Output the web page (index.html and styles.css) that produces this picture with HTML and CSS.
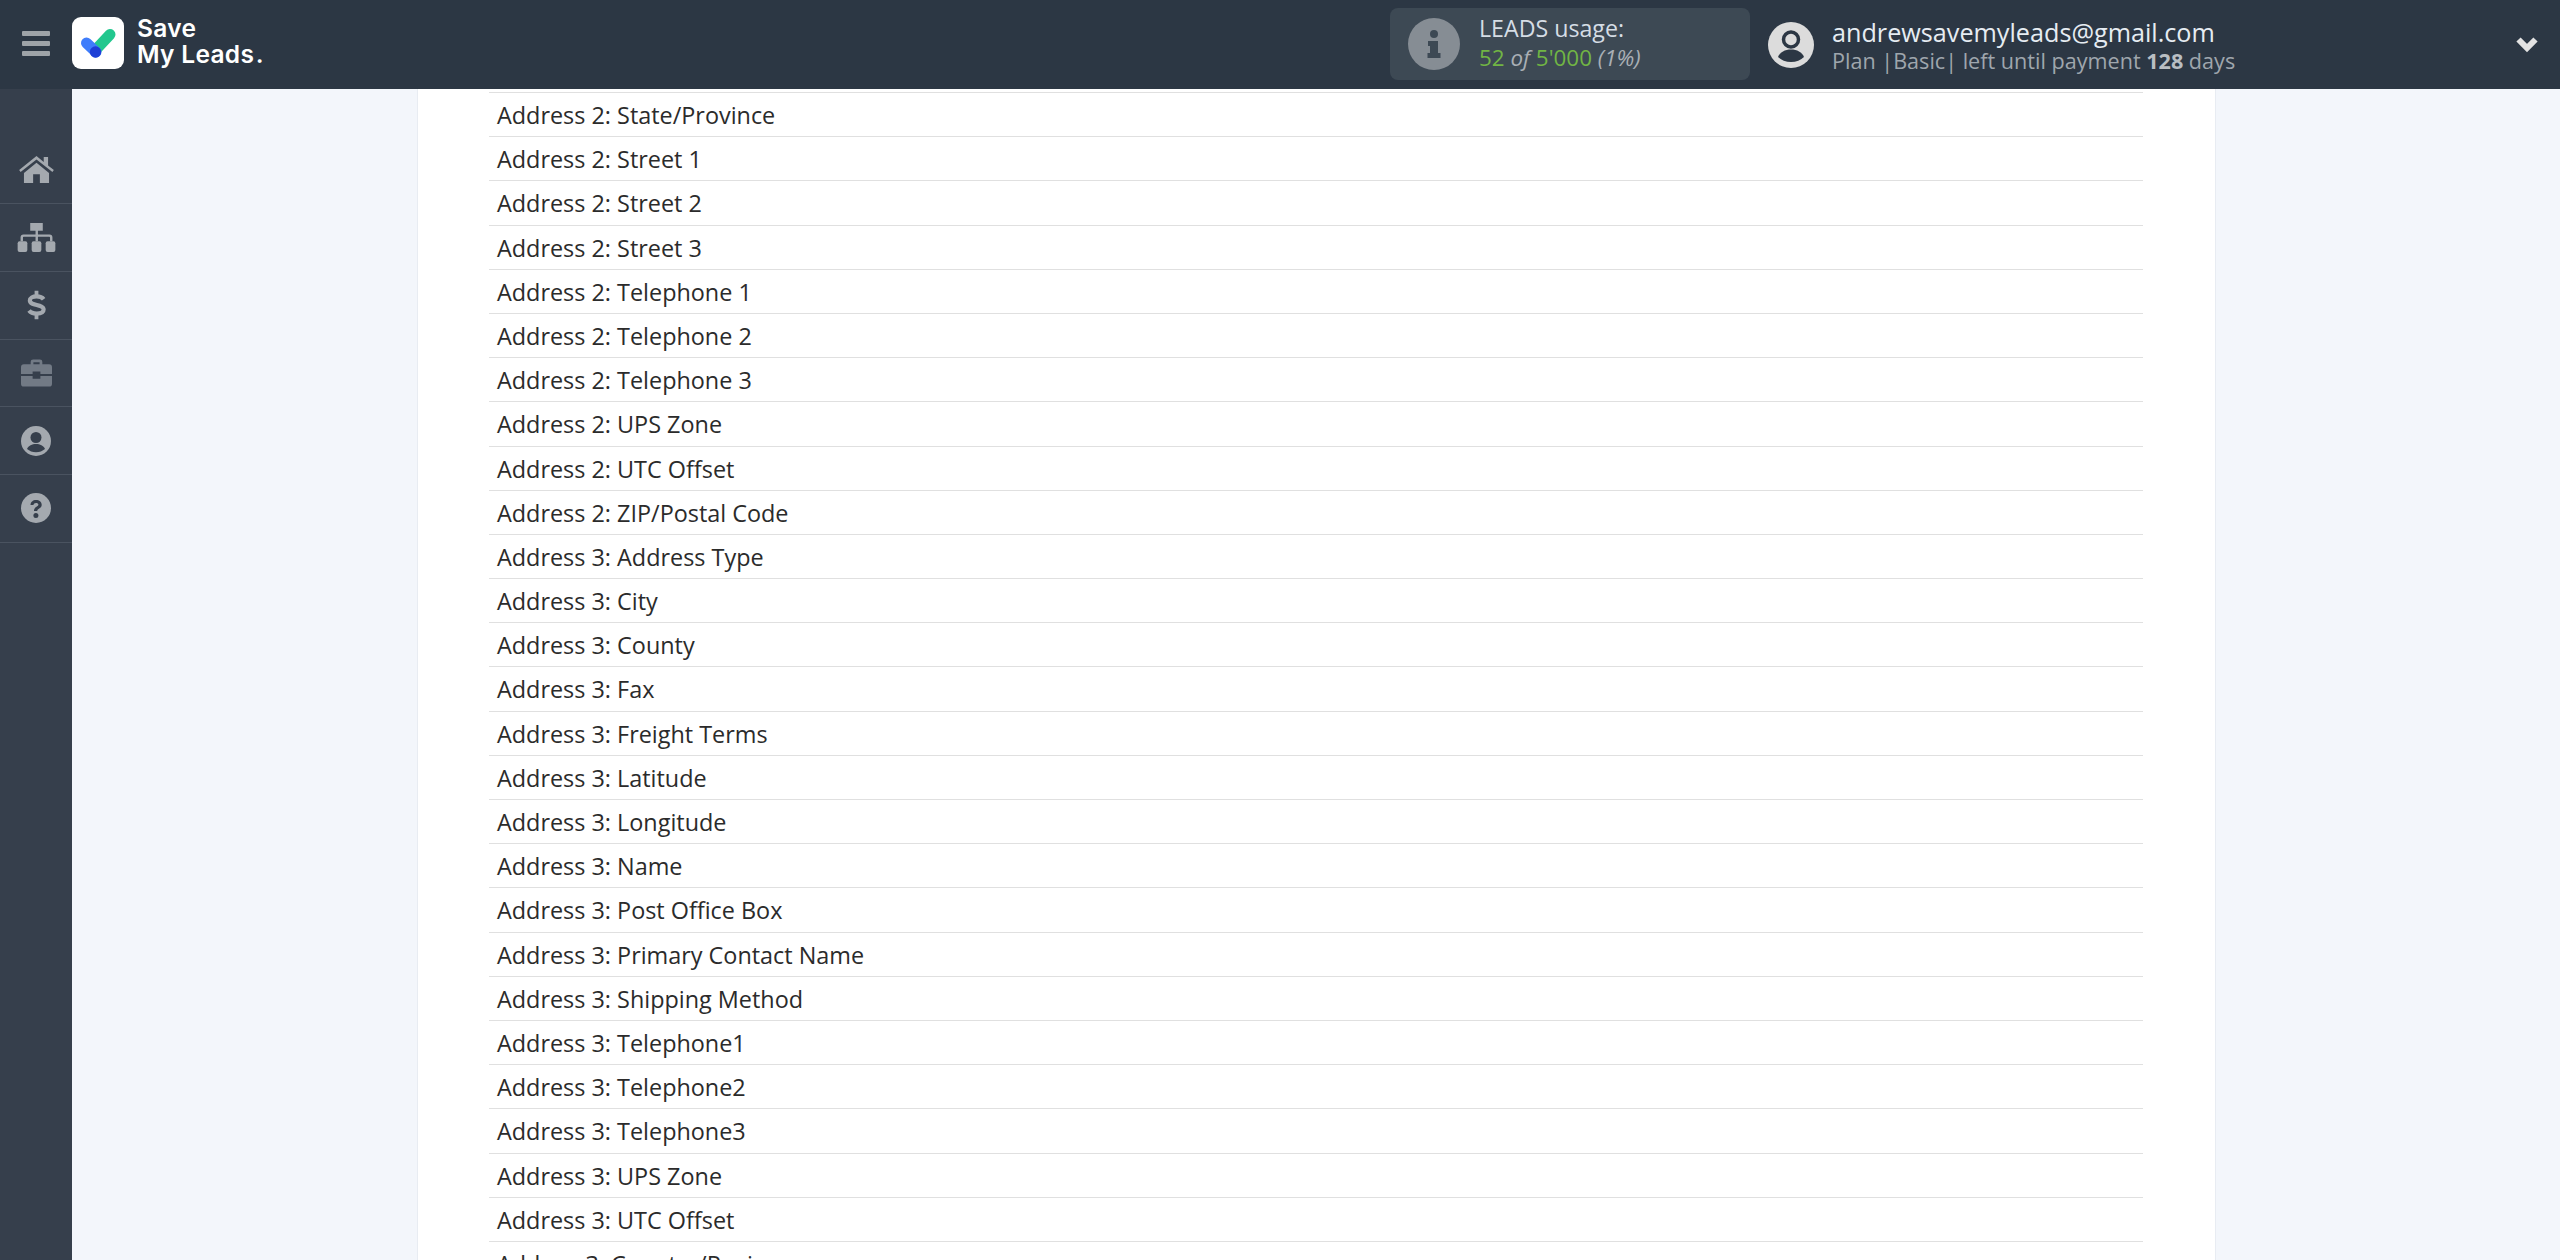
FILE: index.html
```html
<!DOCTYPE html>
<html lang="en">
<head>
<meta charset="utf-8">
<title>Save My Leads</title>
<link rel="stylesheet" href="styles.css">
</head>
<body>
<div class="app">
  <header class="topbar">
    <div class="burger"><span></span><span></span><span></span></div>
    <div class="logo">
      <svg class="logo-mark" viewBox="0 0 52 52">
        <rect width="52" height="52" rx="9" fill="#fff"/>
        <path d="M38 17.500 23.500 33" stroke="#22c78e" stroke-width="11" stroke-linecap="round" fill="none"/>
        <path d="M14.500 26 24 35" stroke="#3f7dfb" stroke-width="11" stroke-linecap="round" fill="none"/>
        <circle cx="23.500" cy="35" r="5.700" fill="#1d3fd6"/>
      </svg>
      <div class="logo-text"><span>Save</span><span>My Leads<i class="logo-dot">.</i></span></div>
    </div>
    <div class="usage">
      <svg class="usage-icon" viewBox="0 0 52 52">
        <circle cx="26" cy="26" r="26" fill="#868d94"/>
        <circle cx="26" cy="16" r="4" fill="#3d4954"/>
        <path d="M20 23h10v12h2.500v5h-13v-5H22v-7h-2z" fill="#3d4954"/>
      </svg>
      <div class="usage-text">
        <div class="usage-title">LEADS usage:</div>
        <div class="usage-count"><b>52</b> <em>of</em> <b>5'000</b> <em>(1%)</em></div>
      </div>
    </div>
    <div class="account">
      <svg class="avatar" viewBox="0 0 46 46">
        <circle cx="23" cy="23" r="23" fill="#dcdcdc"/>
        <circle cx="23" cy="17.500" r="7.500" fill="none" stroke="#2c3744" stroke-width="3.500"/>
        <path d="M10 35c2-5 7-7.500 13-7.500S34 30 36 35c-3 3-8 5-13 5s-10-2-13-5z" fill="#2c3744"/>
      </svg>
      <div class="account-text">
        <div class="account-mail">andrewsavemyleads@gmail.com</div>
        <div class="account-plan">Plan |Basic| left until payment <b>128</b> days</div>
      </div>
    </div>
    <svg class="chevron" viewBox="0 0 24 18"><path d="M3.500 3.500 12 12l8.500-8.500" fill="none" stroke="#e3e3e3" stroke-width="6"/></svg>
  </header>
  <div class="body-row">
    <nav class="sidebar">
      <a class="nav-item"><svg width="35" height="27" viewBox="0 0 36 28"><path fill="#a4a9af" d="M18 0 0 14.500l1.500 2L18 3.500l16.500 13 1.500-2L30 9.800V1h-4.500v5.200zM5 17.500V28h9.500v-9h7v9H31V17.500L18 7z"/></svg></a>
      <a class="nav-item"><svg width="39" height="29" viewBox="0 0 39 30"><path fill="#a4a9af" d="M13 0h13v8h-5v4h12a3 3 0 0 1 3 3v4h-2.500v-4a.8.800 0 0 0-.8-.8H21V19h-2.500v-4.800H6.300a.8.800 0 0 0-.8.800v4H3v-4a3 3 0 0 1 3-3h12.500V8H13z"/><rect y="19" width="10" height="11" rx="2" fill="#a4a9af"/><rect x="14.500" y="19" width="10" height="11" rx="2" fill="#a4a9af"/><rect x="29" y="19" width="10" height="11" rx="2" fill="#a4a9af"/></svg></a>
      <a class="nav-item"><svg width="19" height="30" viewBox="0 0 20 30"><path fill="none" stroke="#a4a9af" stroke-width="4.400" d="M17.500 9C16 6.800 13 6 10 6c-4 0-7 1.600-7 4.300 0 6 14.500 3.400 14.500 9.500 0 2.800-3.200 4.200-7.300 4.200-3.200 0-6.500-1-8-3.200"/><path fill="#a4a9af" d="M8 0h4v6H8zM8 24h4v6H8z"/></svg></a>
      <a class="nav-item"><svg width="31" height="28" viewBox="0 0 32 28"><path fill="#727a85" d="M10 5V2.500A2.500 2.500 0 0 1 12.500 0h7A2.500 2.500 0 0 1 22 2.500V5h7a3 3 0 0 1 3 3v7H20v-2.500h-8V15H0V8a3 3 0 0 1 3-3zm2.800 0h6.400V2.800h-6.400zM0 17h12v3h8v-3h12v8a3 3 0 0 1-3 3H3a3 3 0 0 1-3-3z"/></svg></a>
      <a class="nav-item"><svg width="30" height="30" viewBox="0 0 30 30"><circle cx="15" cy="15" r="15" fill="#a4a9af"/><circle cx="15" cy="11.500" r="5.500" fill="#363f4c"/><path d="M6 23c1.500-3.500 5-5 9-5s7.500 1.500 9 5c-2.500 2-5.500 3.300-9 3.300S8.500 25 6 23z" fill="#363f4c"/></svg></a>
      <a class="nav-item"><svg width="30" height="30" viewBox="0 0 30 30"><circle cx="15" cy="15" r="15" fill="#a4a9af"/><path d="M9.500 12c0-3 2.500-5 5.500-5 3.200 0 5.700 1.900 5.700 4.700 0 4-4.500 3.800-4.500 6.300h-3.200c0-4.500 4.400-4.400 4.400-6.300 0-1-1-1.700-2.400-1.700-1.500 0-2.300.8-2.600 2z" fill="#363f4c"/><circle cx="14.900" cy="22.500" r="2.500" fill="#363f4c"/></svg></a>
    </nav>
    <main class="content">
      <section class="card">
        <ul class="fields">
          <li>Address 2: State/Province</li>
          <li>Address 2: Street 1</li>
          <li>Address 2: Street 2</li>
          <li>Address 2: Street 3</li>
          <li>Address 2: Telephone 1</li>
          <li>Address 2: Telephone 2</li>
          <li>Address 2: Telephone 3</li>
          <li>Address 2: UPS Zone</li>
          <li>Address 2: UTC Offset</li>
          <li>Address 2: ZIP/Postal Code</li>
          <li>Address 3: Address Type</li>
          <li>Address 3: City</li>
          <li>Address 3: County</li>
          <li>Address 3: Fax</li>
          <li>Address 3: Freight Terms</li>
          <li>Address 3: Latitude</li>
          <li>Address 3: Longitude</li>
          <li>Address 3: Name</li>
          <li>Address 3: Post Office Box</li>
          <li>Address 3: Primary Contact Name</li>
          <li>Address 3: Shipping Method</li>
          <li>Address 3: Telephone1</li>
          <li>Address 3: Telephone2</li>
          <li>Address 3: Telephone3</li>
          <li>Address 3: UPS Zone</li>
          <li>Address 3: UTC Offset</li>
          <li>Address3: Country/Region</li>
        </ul>
      </section>
    </main>
  </div>
</div>
</body>
</html>
```
FILE: styles.css
```css
* { box-sizing: border-box; }
html, body { margin: 0; height: 100%; overflow: hidden; }
body { font-family: "Open Sans", "Liberation Sans", sans-serif; color: #2b2b2b; background: #f3f6fb; }
.app { height: 100vh; display: flex; flex-direction: column; overflow: hidden; }

.topbar { flex: 0 0 89px; background: #2c3744; display: flex; align-items: center; }
.burger { width: 72px; display: flex; flex-direction: column; align-items: center; gap: 5px; padding-bottom: 3px; }
.burger span { width: 28px; height: 5px; border-radius: 1px; background: #9ea3a8; }
.logo { display: flex; align-items: center; gap: 13px; width: 1318px; padding-bottom: 7px; }
.logo-mark { width: 52px; height: 52px; flex: none; margin-top: 4px; }
.logo-text { display: flex; flex-direction: column; font-family: Inter, "Liberation Sans", sans-serif; font-weight: 600; font-size: 24.500px; line-height: 26px; color: #fff; letter-spacing: .3px; }
.logo-dot { font-style: normal; margin-left: 1.500px; }

.usage { width: 360px; height: 72px; margin-bottom: 1px; background: #3d4954; border-radius: 8px; display: flex; align-items: center; padding-left: 18px; gap: 19px; }
.usage-icon { width: 52px; height: 52px; flex: none; }
.usage-text { line-height: 30px; padding-bottom: 3px; }
.usage-title { color: #d5dde5; font-size: 23.200px; }
.usage-count { font-size: 22.400px; }
.usage-count b { font-weight: 400; color: #71b544; }
.usage-count em { color: #a9afb5; }

.account { display: flex; align-items: center; margin-left: 18px; gap: 18px; }
.avatar { width: 46px; height: 46px; flex: none; }
.account-mail { font-size: 25.200px; line-height: 30px; padding-top: 1px; color: #e6ecf2; }
.account-plan { font-size: 21.600px; line-height: 26px; padding-top: 1px; color: #9fa6ad; }
.account-plan b { font-weight: 700; color: #b9bec3; }
.chevron { width: 24px; height: 18px; margin-left: auto; margin-right: 21px; }

.body-row { flex: 1; display: flex; min-height: 0; }
.sidebar { flex: 0 0 72px; background: #363f4c; padding-top: 47.500px; }
.nav-item { height: 67.700px; border-bottom: 1px solid #4a5360; display: flex; align-items: center; justify-content: center; }

.content { flex: 1; min-width: 0; padding-left: 345px; padding-right: 344px; }
.card { height: 100%; background: #fff; border-left: 1px solid #e8ecf2; border-right: 1px solid #e8ecf2; padding: 3px 72px 0 71px; overflow: hidden; }
.fields { list-style: none; margin: 0; padding: 0; border-top: 1px solid #e0e0e0; }
.fields li { height: 44.200px; border-bottom: 1px solid #e0e0e0; padding-left: 8px; font-size: 23.400px; line-height: 44px; color: #2b2b2b; white-space: nowrap; }
```
